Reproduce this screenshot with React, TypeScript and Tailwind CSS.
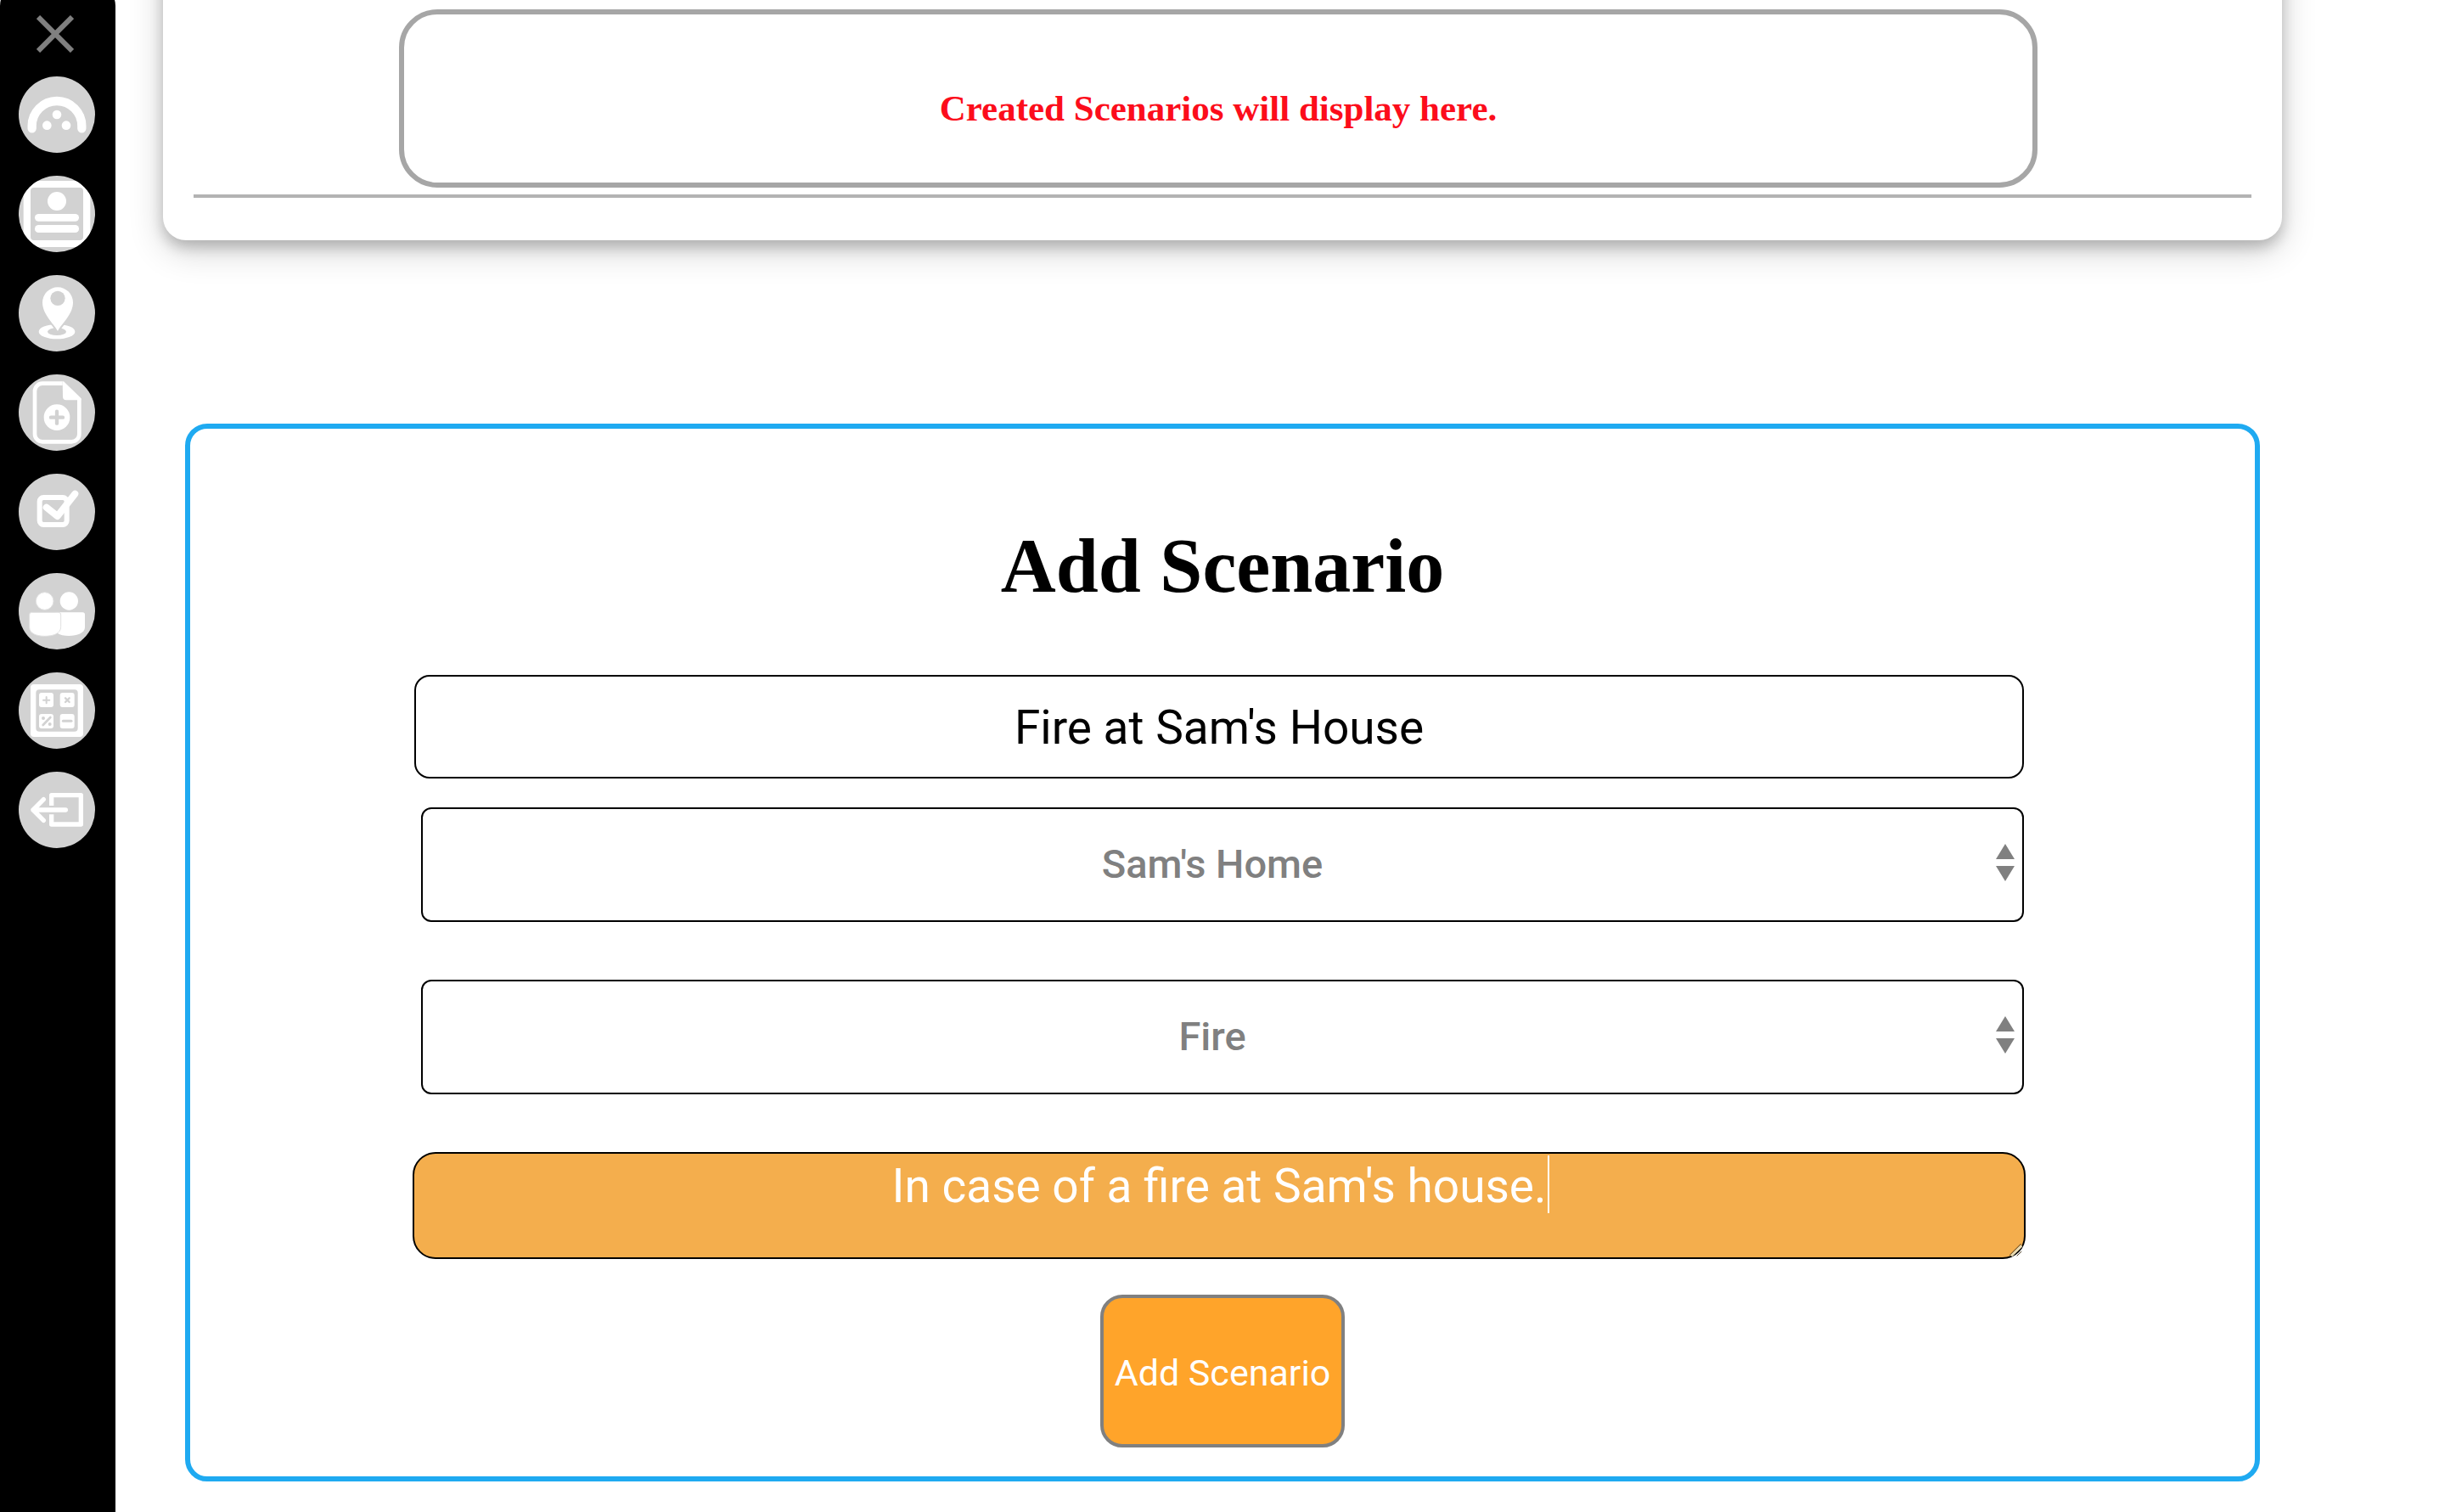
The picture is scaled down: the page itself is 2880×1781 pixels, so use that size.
import type { ReactNode } from "react";

const icons: { label: string; art: ReactNode }[] = [
  {
    label: "Dashboard",
    art: (
      <>
        <path d="M47 184V175A88 88 0 0 1 223 175V184" fill="none" stroke="#fff" strokeWidth="31" strokeLinecap="round" />
        <circle cx="135" cy="135" r="16" fill="#fff" />
        <circle cx="100" cy="173" r="16" fill="#fff" />
        <circle cx="168" cy="173" r="16" fill="#fff" />
      </>
    ),
  },
  {
    label: "Profile",
    art: (
      <>
        <rect x="17" y="18" width="236" height="234" fill="#fff" />
        <rect x="42" y="42" width="186" height="186" rx="12" fill="#d2d2d2" />
        <circle cx="135" cy="90" r="33" fill="#fff" />
        <rect x="57" y="135" width="156" height="26" rx="13" fill="#fff" />
        <rect x="57" y="174" width="156" height="27" rx="13" fill="#fff" />
      </>
    ),
  },
  {
    label: "Locations",
    art: (
      <>
        <ellipse cx="135" cy="200" rx="64" ry="26" fill="#fff" />
        <ellipse cx="135" cy="200" rx="33" ry="13" fill="#d2d2d2" />
        <path
          d="M138 198C126 174 84 140 84 97A54 54 0 0 1 192 97C192 140 150 174 138 198Z"
          fill="#fff"
          stroke="#d2d2d2"
          strokeWidth="12"
          paintOrder="stroke"
        />
        <circle cx="138" cy="82" r="26" fill="#d2d2d2" />
      </>
    ),
  },
  {
    label: "Add document",
    art: (
      <>
        <path
          d="M155 32H84A27 27 0 0 0 57 59V211A27 27 0 0 0 84 238H187A27 27 0 0 0 214 211V86"
          fill="none"
          stroke="#fff"
          strokeWidth="14"
        />
        <path d="M155 25H159L221 85V91H168A12 12 0 0 1 156 79Z" fill="#fff" />
        <circle cx="135" cy="152" r="46" fill="#fff" />
        <path d="M114 152H156M135 131V173" stroke="#d2d2d2" strokeWidth="13" strokeLinecap="round" />
      </>
    ),
  },
  {
    label: "Tasks",
    art: (
      <>
        <rect x="74" y="84" width="96" height="96" rx="14" fill="none" stroke="#fff" strokeWidth="18" />
        <path
          d="M98 119L137 150L199 71"
          fill="none"
          stroke="#fff"
          strokeWidth="24"
          strokeLinecap="round"
          strokeLinejoin="round"
        />
      </>
    ),
  },
  {
    label: "Contacts",
    art: (
      <>
        <circle cx="178" cy="99" r="32" fill="#fff" />
        <path d="M130 139H226Q234 139 234 147V192C234 212 206 222 178 222C160 222 146 219 138 213Z" fill="#fff" />
        <circle cx="92" cy="99" r="31" fill="#fff" stroke="#e2e2e2" strokeWidth="3" />
        <path
          d="M46 139H141Q149 139 149 147V190C149 214 122 223 92 223C64 223 38 214 38 192V147Q38 139 46 139Z"
          fill="#fff"
          stroke="#e0e0e0"
          strokeWidth="3"
        />
      </>
    ),
  },
  {
    label: "Calculator",
    art: (
      <>
        <rect x="42" y="42" width="186" height="186" rx="12" fill="#fff" />
        <rect x="61" y="61" width="148" height="148" rx="12" fill="#d2d2d2" />
        <rect x="72" y="72" width="51" height="51" rx="9" fill="#fff" />
        <rect x="146" y="72" width="51" height="51" rx="9" fill="#fff" />
        <rect x="72" y="147" width="51" height="51" rx="9" fill="#fff" />
        <rect x="146" y="147" width="51" height="51" rx="9" fill="#fff" />
        <g stroke="#d2d2d2" strokeLinecap="round">
          <path d="M87 98H109M98 87V109" strokeWidth="6" />
          <path d="M165 91L179 105M179 91L165 105" strokeWidth="7" />
          <path d="M86 186L112 159" strokeWidth="8" />
          <path d="M157 172H186" strokeWidth="9" />
        </g>
        <circle cx="87" cy="162" r="6" fill="#d2d2d2" />
        <circle cx="110" cy="183" r="6" fill="#d2d2d2" />
      </>
    ),
  },
  {
    label: "Log out",
    art: (
      <g fill="none" stroke="#fff" strokeWidth="16" strokeLinejoin="round">
        <path d="M116 120V83H220V186H116V151" />
        <path d="M51 135H166M88 98L51 135L88 172" strokeLinecap="round" />
      </g>
    ),
  },
];

function Sidebar() {
  return (
    <aside className="-mt-5 w-[136px] shrink-0 rounded-t-[27px] bg-black pt-[38px] pl-[22px]">
      <button type="button" aria-label="Close menu" className="ml-[21px] block size-11">
        <svg viewBox="0 0 44 44" className="size-11">
          <path d="M2 2L42 42M42 2L2 42" stroke="#808080" strokeWidth="6" />
        </svg>
      </button>
      <nav className="mt-7 flex flex-col gap-[27px]">
        {icons.map(({ label, art }) => (
          <a key={label} href="#" aria-label={label} className="block size-[90px] overflow-hidden rounded-full bg-[#d2d2d2]">
            <svg viewBox="0 0 270 270" className="size-full">
              {art}
            </svg>
          </a>
        ))}
      </nav>
    </aside>
  );
}

function SelectField({ label, value }: { label: string; value: string }) {
  return (
    <div className="relative mr-[2px] ml-[10px]">
      <select
        aria-label={label}
        defaultValue={value}
        className="block h-[135px] w-full appearance-none rounded-xl border-2 border-black bg-white pr-6 text-center text-[47px] font-medium text-[#808080] [text-align-last:center]"
      >
        <option>{value}</option>
      </select>
      <svg viewBox="0 0 22 44" className="pointer-events-none absolute top-[43px] right-[11px] h-11 w-[22px]">
        <path d="M11 0L22 18H0ZM0 26H22L11 44Z" fill="#808080" />
      </svg>
    </div>
  );
}

export default function App() {
  return (
    <div className="flex min-h-screen overflow-hidden bg-white font-['Roboto','Liberation_Sans',sans-serif] text-black">
      <Sidebar />
      <main className="-mt-16 mr-48 ml-14 min-w-0 flex-1">
        <section className="rounded-b-[27px] bg-white px-9 pt-[75px] pb-[50px] shadow-[0_8px_16px_0_rgba(0,0,0,0.2),0_12px_40px_0_rgba(0,0,0,0.19)]">
          <div className="mr-[252px] ml-[242px] flex h-[210px] items-center justify-center rounded-[45px] border-6 border-[#a6a6a6]">
            <p className="mt-6 font-['Liberation_Serif',serif] text-[43px] font-bold text-[#fc0d1b]">
              Created Scenarios will display here.
            </p>
          </div>
          <hr className="mt-2 border-t-4 border-[#b3b3b3]" />
        </section>

        <form
          onSubmit={(e) => e.preventDefault()}
          className="mx-[26px] mt-[216px] rounded-[26px] border-6 border-[#1faaf1] pt-[110px] pb-[34px]"
        >
          <h1 className="text-center font-['Liberation_Serif',serif] text-[90px] leading-[104px] font-bold">Add Scenario</h1>
          <div className="mt-[76px] mr-[270px] ml-[262px]">
            <div className="px-[2px]">
              <input
                aria-label="Scenario name"
                defaultValue="Fire at Sam's House"
                className="block h-[122px] w-full rounded-[18px] border-2 border-black bg-white pt-[2px] text-center text-[55px]"
              />
            </div>
            <div className="mt-[34px] mb-[68px] flex flex-col gap-[68px]">
              <SelectField label="Location" value="Sam's Home" />
              <SelectField label="Scenario type" value="Fire" />
            </div>
            <div className="relative">
              <textarea
                aria-label="Description"
                defaultValue="In case of a fire at Sam's house."
                className="block h-[126px] w-full resize-none overflow-hidden rounded-[27px] border-2 border-black bg-[#f4ae4d] pt-[2px] text-center text-[55px] leading-[72px] text-white outline-none"
              />
              <span className="absolute top-1 left-[calc(50%+387px)] h-[68px] w-[2px] bg-white" />
              <svg viewBox="0 0 45 45" className="pointer-events-none absolute right-1 bottom-[3px] size-[15px]">
                <path d="M6 43L43 7" stroke="#e8d9b0" strokeWidth="9" />
                <path d="M0 41L41 0M26 43L43 27" stroke="#4a3a20" strokeWidth="3" />
              </svg>
            </div>
          </div>
          <button
            type="submit"
            className="mx-auto mt-[42px] block h-[180px] w-[288px] rounded-[26px] border-4 border-[#808080] bg-[#ffa42a] pt-1 text-[43px] whitespace-nowrap text-white"
          >
            Add Scenario
          </button>
        </form>
      </main>
    </div>
  );
}
